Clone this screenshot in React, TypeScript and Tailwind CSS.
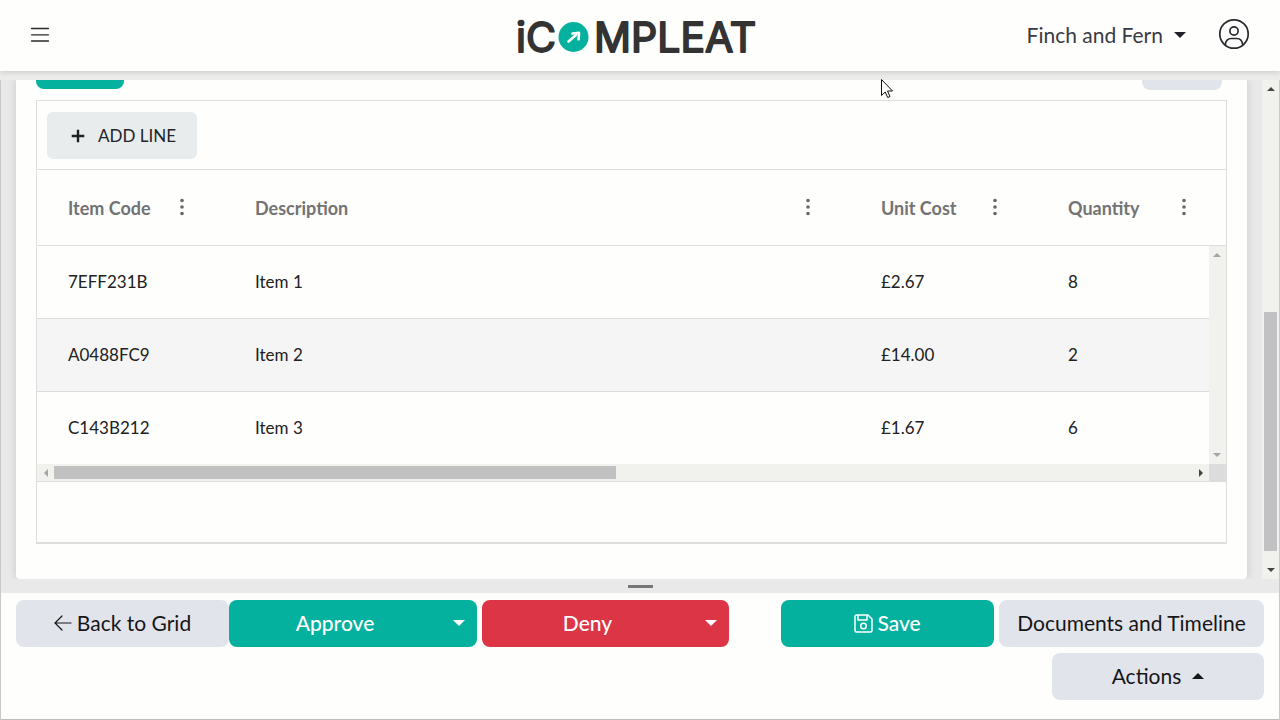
import React from "react";

interface LineItem {
  code: string;
  description: string;
  unitCost: string;
  quantity: number;
}

const items: LineItem[] = [
  { code: "7EFF231B", description: "Item 1", unitCost: "£2.67", quantity: 8 },
  { code: "A0488FC9", description: "Item 2", unitCost: "£14.00", quantity: 2 },
  { code: "C143B212", description: "Item 3", unitCost: "£1.67", quantity: 6 },
];

const Triangle: React.FC<{ direction: "up" | "down" | "left" | "right"; className: string }> = ({
  direction,
  className,
}) => {
  const points = {
    up: "0,10 5,0 10,10",
    down: "0,0 10,0 5,10",
    left: "10,0 10,10 0,5",
    right: "0,0 10,5 0,10",
  };
  return (
    <svg viewBox="0 0 10 10" preserveAspectRatio="none" fill="currentColor" className={className} aria-hidden="true">
      <polygon points={points[direction]} />
    </svg>
  );
};

const Logo: React.FC = () => (
  <svg
    width="260"
    height="64"
    viewBox="510 5 260 64"
    role="img"
    aria-label="iCOMPLEAT"
    className="font-['Inter',sans-serif] font-normal"
  >
    <g fill="#333333" stroke="#333333" strokeWidth="1.8" strokeLinejoin="round" fontSize="41">
      <text x="516" y="52">iC</text>
      <text x="594" y="52">MPLEAT</text>
    </g>
    <circle cx="573.5" cy="37" r="15" fill="#04b19e" />
    <g stroke="#ffffff" strokeWidth="2.6" strokeLinecap="round" strokeLinejoin="round" fill="none">
      <path d="M568.5 41.5 L576 35" />
      <path d="M572.5 33.5 L579 32.8 L578.6 39.3" />
    </g>
  </svg>
);

const Header: React.FC = () => (
  <header className="relative z-10 grid h-[71px] shrink-0 grid-cols-3 items-center bg-[#fefefd] px-[30px] pb-px shadow-[0_2px_5px_rgba(0,0,0,0.12)]">
    <button aria-label="Menu" className="flex w-5 items-center">
      <svg width="20" height="16" viewBox="0 0 20 16" stroke="#2b2b2b" strokeWidth="1.3" strokeLinecap="round">
        <path d="M1.5 1.5h17M1.5 7.8h17M1.5 14h17" />
      </svg>
    </button>
    <div className="flex justify-center pt-1">
      <Logo />
    </div>
    <div className="flex items-center justify-end gap-8">
      <button className="flex items-center gap-[11px] text-[21px] text-[#3a3a42]">
        Finch and Fern
        <Triangle direction="down" className="h-[6px] w-3 text-[#22222c]" />
      </button>
      <button aria-label="Account" className="pb-[2px]">
        <svg width="32" height="32" viewBox="0 0 32 32" fill="none" stroke="#29292f" strokeWidth="1.7">
          <circle cx="16" cy="16" r="14.2" />
          <circle cx="16" cy="13" r="4.1" />
          <path d="M7.3 26.8c.4-4 3-6.3 6-6.3h5.4c3 0 5.6 2.3 6 6.3" />
        </svg>
      </button>
    </div>
  </header>
);

const Heading: React.FC<{ label: string; colSpan?: number }> = ({ label, colSpan }) => (
  <th colSpan={colSpan} scope="col" className="h-[76px] border-b border-[#dededc] pl-[31px] pr-[38px] text-left">
    <div className="flex items-center justify-between">
      <span className="whitespace-nowrap text-lg font-bold text-[#737373]">{label}</span>
      <button aria-label={`${label} column menu`} className="pb-[2px] text-[#666666]">
        <svg width="8" height="18" viewBox="0 0 8 18" fill="currentColor">
          <circle cx="4" cy="2.5" r="1.8" />
          <circle cx="4" cy="9" r="1.8" />
          <circle cx="4" cy="15.5" r="1.8" />
        </svg>
      </button>
    </div>
  </th>
);

const LinesGrid: React.FC = () => (
  <section className="border border-b-2 border-[#dededc]">
    <div className="border-b border-[#dededc] px-[10px] pb-[10px] pt-[11px]">
      <button className="flex h-[47px] w-[150px] items-center gap-[13px] rounded-md bg-[#e9ecec] pl-6 text-[17px] text-[#212529]">
        <svg width="14" height="14" viewBox="0 0 14 14" stroke="#212121" strokeWidth="2.4">
          <path d="M7 .7v12.6M.7 7h12.6" />
        </svg>
        ADD LINE
      </button>
    </div>
    <table className="w-full table-fixed border-separate border-spacing-0 text-[17px] text-[#212121]">
      <colgroup>
        <col className="w-[187px]" />
        <col />
        <col className="w-[187px]" />
        <col className="w-[172px]" />
        <col className="w-[17px]" />
      </colgroup>
      <thead>
        <tr>
          <Heading label="Item Code" />
          <Heading label="Description" />
          <Heading label="Unit Cost" />
          <Heading label="Quantity" colSpan={2} />
        </tr>
      </thead>
      <tbody>
        {items.map((item, index) => {
          const cell = `pl-[31px] ${index < items.length - 1 ? "h-[73px] border-b border-[#dcdcdc]" : "h-[72px]"} ${
            index % 2 === 1 ? "bg-[#f5f5f5]" : ""
          }`;
          return (
            <tr key={item.code}>
              <td className={cell}>{item.code}</td>
              <td className={cell}>{item.description}</td>
              <td className={cell}>{item.unitCost}</td>
              <td className={cell}>{item.quantity}</td>
              {index === 0 && (
                <td rowSpan={3} className="h-px bg-[#f1f1ed] p-0">
                  <div className="flex h-full flex-col items-center justify-between py-[7px] text-[#a5a5a5]">
                    <Triangle direction="up" className="h-1 w-2" />
                    <Triangle direction="down" className="h-1 w-2" />
                  </div>
                </td>
              )}
            </tr>
          );
        })}
      </tbody>
    </table>
    <div className="flex h-[18px] items-center border-b border-[#dededc] bg-[#f1f1ed]">
      <div className="flex w-[17px] shrink-0 justify-center text-[#a5a5a5]">
        <Triangle direction="left" className="h-2 w-1" />
      </div>
      <div className="flex-1">
        <div className="h-[13px] w-[49.4%] bg-[#c1c1c1]" />
      </div>
      <div className="flex w-[17px] shrink-0 justify-center text-[#444444]">
        <Triangle direction="right" className="h-2 w-1" />
      </div>
      <div className="h-full w-[17px] shrink-0 bg-[#dcdcdc]" />
    </div>
    <div className="h-[60px]" />
  </section>
);

const PageScrollbar: React.FC = () => (
  <div className="flex w-[17px] shrink-0 flex-col items-center bg-[#f1f1ed] py-[7px] text-[#444444]">
    <Triangle direction="up" className="h-1 w-2 shrink-0" />
    <div className="flex min-h-0 w-[13px] flex-1 flex-col justify-end pb-[17px]">
      <div className="h-[52%] bg-[#c1c1c3]" />
    </div>
    <Triangle direction="down" className="h-1 w-2 shrink-0" />
  </div>
);

const SplitButton: React.FC<{ label: string; className: string }> = ({ label, className }) => (
  <div className={`flex h-[47px] overflow-hidden rounded-lg font-medium text-white ${className}`}>
    <button className="flex-1 pb-px">{label}</button>
    <button aria-label={`${label} options`} className="flex w-9 items-center justify-center pb-[2px]">
      <Triangle direction="down" className="h-[6px] w-3" />
    </button>
  </div>
);

const ActionBar: React.FC = () => (
  <footer className="flex h-[127px] shrink-0 items-start justify-between border-b border-[#bdbdbd] bg-[#fefefd] px-[15px] pt-[7px] text-[21px] text-[#161616]">
    <div className="flex gap-[5px]">
      <div className="flex">
        <button className="flex h-[47px] w-[213px] items-center justify-center gap-[5px] rounded-lg bg-[#e2e4ec] pb-px">
          <svg width="18" height="16" viewBox="0 0 18 16" fill="none" stroke="currentColor" strokeWidth="1.2" strokeLinecap="round">
            <path d="M1 8h16M8 1 1 8l7 7" />
          </svg>
          Back to Grid
        </button>
        <SplitButton label="Approve" className="w-[248px] bg-[#04b19e]" />
      </div>
      <SplitButton label="Deny" className="w-[247px] bg-[#dc3545]" />
    </div>
    <div className="flex w-[483px] flex-wrap justify-end gap-x-[5px] gap-y-[6px]">
      <button className="flex h-[47px] flex-1 items-center justify-center gap-1 rounded-lg bg-[#04b19e] pb-px font-medium text-white">
        <svg width="19" height="19" viewBox="0 0 19 19" fill="none" stroke="currentColor" strokeWidth="1.5" strokeLinejoin="round">
          <path d="M2.5 1h11.5l4 4v11.5q0 1.5-1.5 1.5h-14q-1.5 0-1.5-1.5v-14q0-1.5 1.5-1.5z" />
          <path d="M4 1v5h9v-5" />
          <circle cx="9.5" cy="12" r="2.8" />
        </svg>
        Save
      </button>
      <button className="h-[47px] w-[265px] whitespace-nowrap rounded-lg bg-[#e2e4ec] pb-px">
        Documents and Timeline
      </button>
      <button className="flex h-[47px] w-[212px] items-center justify-center gap-[11px] rounded-lg bg-[#e2e4ec] pb-px">
        Actions
        <Triangle direction="up" className="h-[6px] w-3" />
      </button>
    </div>
  </footer>
);

export default function App() {
  return (
    <div className="flex h-screen flex-col overflow-hidden bg-[#e9e9ea] font-['Lato','Open_Sans',sans-serif]">
      <Header />
      <div className="h-[9px] shrink-0 bg-[#ececeb]" />
      <div className="flex min-h-0 flex-1 flex-col border-x border-[#c9c9c9]">
        <main className="flex min-h-0 flex-1">
          <div className="min-w-0 flex-1 overflow-hidden px-[15px]">
            <div className="flex h-full flex-col rounded-b bg-[#fefefd] px-5 shadow-[0_0_10px_rgba(0,0,0,0.14)]">
              <div className="flex h-5 shrink-0 items-start justify-between pr-[5px]">
                <button aria-label="Lines" className="h-[9px] w-[88px] rounded-b-lg bg-[#04b19e]" />
                <button aria-label="Options" className="h-[10px] w-20 rounded-b-lg bg-[#e2e4ec]" />
              </div>
              <LinesGrid />
            </div>
          </div>
          <PageScrollbar />
        </main>
        <div className="flex h-[14px] shrink-0 items-center justify-center">
          <div className="h-[3px] w-[25px] bg-[#77777a]" />
        </div>
        <ActionBar />
      </div>
      <svg width="12" height="20" viewBox="0 0 12 20" className="absolute left-[881px] top-[79px] z-20" aria-hidden="true">
        <path d="M.5.5v16l3.7-3.5 2.5 5.5 2.3-1-2.5-5.5h5z" fill="#ffffff" stroke="#111111" />
      </svg>
    </div>
  );
}
